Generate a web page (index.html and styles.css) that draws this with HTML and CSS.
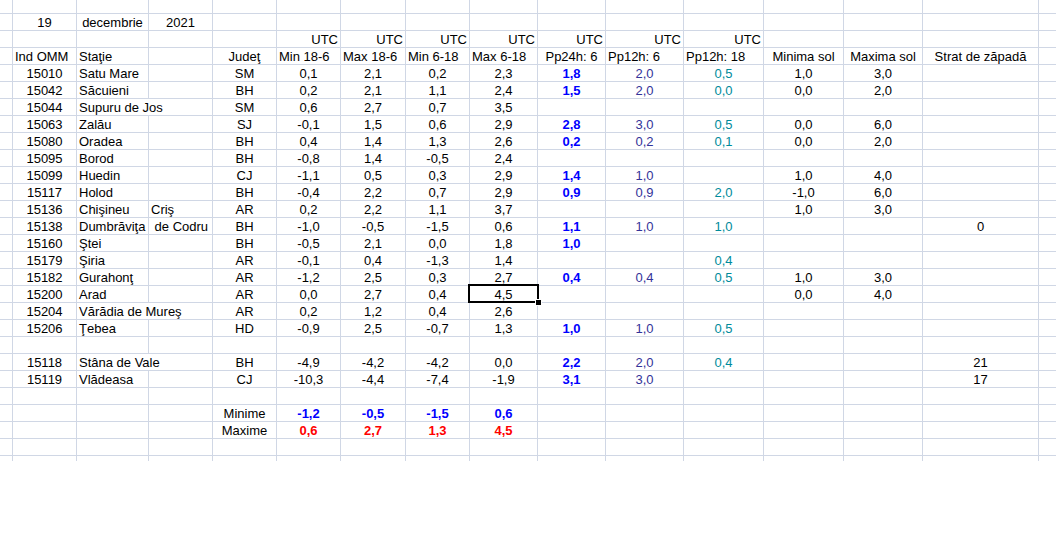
FILE: index.html
```html
<!DOCTYPE html>
<html lang="ro">
<head>
<meta charset="utf-8">
<title>Temperaturi 19 decembrie 2021</title>
<link rel="stylesheet" href="styles.css">
</head>
<body>
<div class="sheet">
  <div class="r top"><span></span><span></span><span></span><span></span><span></span><span></span><span></span><span></span><span></span><span></span><span></span><span></span><span></span><span></span><span></span><span></span></div>
  <div class="r"><span></span><span>19</span><span>decembrie</span><span>2021</span><span></span><span></span><span></span><span></span><span></span><span></span><span></span><span></span><span></span><span></span><span></span><span></span></div>
  <div class="r"><span></span><span></span><span></span><span></span><span></span><span class="rt">UTC</span><span class="rt">UTC</span><span class="rt">UTC</span><span class="rt">UTC</span><span class="rt">UTC</span><span class="rt">UTC</span><span class="rt">UTC</span><span></span><span></span><span></span><span></span></div>
  <div class="r"><span></span><span class="l">Ind OMM</span><span class="l">Staţie</span><span></span><span>Judeţ</span><span class="l">Min 18-6</span><span class="l">Max 18-6</span><span class="l">Min 6-18</span><span class="l">Max 6-18</span><span>Pp24h: 6</span><span class="l">Pp12h: 6</span><span class="l">Pp12h: 18</span><span>Minima sol</span><span>Maxima sol</span><span>Strat de zăpadă</span><span></span></div>

  <div class="r"><span></span><span>15010</span><span class="l">Satu Mare</span><span></span><span>SM</span><span>0,1</span><span>2,1</span><span>0,2</span><span>2,3</span><span class="b">1,8</span><span class="p">2,0</span><span class="t">0,5</span><span>1,0</span><span>3,0</span><span></span><span></span></div>
  <div class="r"><span></span><span>15042</span><span class="l">Săcuieni</span><span></span><span>BH</span><span>0,2</span><span>2,1</span><span>1,1</span><span>2,4</span><span class="b">1,5</span><span class="p">2,0</span><span class="t">0,0</span><span>0,0</span><span>2,0</span><span></span><span></span></div>
  <div class="r"><span></span><span>15044</span><span class="l s2">Supuru de Jos</span><span>SM</span><span>0,6</span><span>2,7</span><span>0,7</span><span>3,5</span><span></span><span></span><span></span><span></span><span></span><span></span><span></span></div>
  <div class="r"><span></span><span>15063</span><span class="l">Zalău</span><span></span><span>SJ</span><span>-0,1</span><span>1,5</span><span>0,6</span><span>2,9</span><span class="b">2,8</span><span class="p">3,0</span><span class="t">0,5</span><span>0,0</span><span>6,0</span><span></span><span></span></div>
  <div class="r"><span></span><span>15080</span><span class="l">Oradea</span><span></span><span>BH</span><span>0,4</span><span>1,4</span><span>1,3</span><span>2,6</span><span class="b">0,2</span><span class="p">0,2</span><span class="t">0,1</span><span>0,0</span><span>2,0</span><span></span><span></span></div>
  <div class="r"><span></span><span>15095</span><span class="l">Borod</span><span></span><span>BH</span><span>-0,8</span><span>1,4</span><span>-0,5</span><span>2,4</span><span></span><span></span><span></span><span></span><span></span><span></span><span></span></div>
  <div class="r"><span></span><span>15099</span><span class="l">Huedin</span><span></span><span>CJ</span><span>-1,1</span><span>0,5</span><span>0,3</span><span>2,9</span><span class="b">1,4</span><span class="p">1,0</span><span></span><span>1,0</span><span>4,0</span><span></span><span></span></div>
  <div class="r"><span></span><span>15117</span><span class="l">Holod</span><span></span><span>BH</span><span>-0,4</span><span>2,2</span><span>0,7</span><span>2,9</span><span class="b">0,9</span><span class="p">0,9</span><span class="t">2,0</span><span>-1,0</span><span>6,0</span><span></span><span></span></div>
  <div class="r"><span></span><span>15136</span><span class="l">Chişineu</span><span class="l">Criş</span><span>AR</span><span>0,2</span><span>2,2</span><span>1,1</span><span>3,7</span><span></span><span></span><span></span><span>1,0</span><span>3,0</span><span></span><span></span></div>
  <div class="r"><span></span><span>15138</span><span class="l">Dumbrăviţa</span><span class="l">&nbsp;de Codru</span><span>BH</span><span>-1,0</span><span>-0,5</span><span>-1,5</span><span>0,6</span><span class="b">1,1</span><span class="p">1,0</span><span class="t">1,0</span><span></span><span></span><span>0</span><span></span></div>
  <div class="r"><span></span><span>15160</span><span class="l">Ştei</span><span></span><span>BH</span><span>-0,5</span><span>2,1</span><span>0,0</span><span>1,8</span><span class="b">1,0</span><span></span><span></span><span></span><span></span><span></span><span></span></div>
  <div class="r"><span></span><span>15179</span><span class="l">Şiria</span><span></span><span>AR</span><span>-0,1</span><span>0,4</span><span>-1,3</span><span>1,4</span><span></span><span></span><span class="t">0,4</span><span></span><span></span><span></span><span></span></div>
  <div class="r"><span></span><span>15182</span><span class="l">Gurahonţ</span><span></span><span>AR</span><span>-1,2</span><span>2,5</span><span>0,3</span><span>2,7</span><span class="b">0,4</span><span class="p">0,4</span><span class="t">0,5</span><span>1,0</span><span>3,0</span><span></span><span></span></div>
  <div class="r"><span></span><span>15200</span><span class="l">Arad</span><span></span><span>AR</span><span>0,0</span><span>2,7</span><span>0,4</span><span class="sel">4,5</span><span></span><span></span><span></span><span>0,0</span><span>4,0</span><span></span><span></span></div>
  <div class="r"><span></span><span>15204</span><span class="l s2">Vărădia de Mureş</span><span>AR</span><span>0,2</span><span>1,2</span><span>0,4</span><span>2,6</span><span></span><span></span><span></span><span></span><span></span><span></span><span></span></div>
  <div class="r"><span></span><span>15206</span><span class="l">Ţebea</span><span></span><span>HD</span><span>-0,9</span><span>2,5</span><span>-0,7</span><span>1,3</span><span class="b">1,0</span><span class="p">1,0</span><span class="t">0,5</span><span></span><span></span><span></span><span></span></div>
  <div class="r"><span></span><span></span><span></span><span></span><span></span><span></span><span></span><span></span><span></span><span></span><span></span><span></span><span></span><span></span><span></span><span></span></div>
  <div class="r"><span></span><span>15118</span><span class="l s2">Stâna de Vale</span><span>BH</span><span>-4,9</span><span>-4,2</span><span>-4,2</span><span>0,0</span><span class="b">2,2</span><span class="p">2,0</span><span class="t">0,4</span><span></span><span></span><span>21</span><span></span></div>
  <div class="r"><span></span><span>15119</span><span class="l">Vlădeasa</span><span></span><span>CJ</span><span>-10,3</span><span>-4,4</span><span>-7,4</span><span>-1,9</span><span class="b">3,1</span><span class="p">3,0</span><span></span><span></span><span></span><span>17</span><span></span></div>
  <div class="r"><span></span><span></span><span></span><span></span><span></span><span></span><span></span><span></span><span></span><span></span><span></span><span></span><span></span><span></span><span></span><span></span></div>
  <div class="r"><span></span><span></span><span></span><span></span><span>Minime</span><span class="mn">-1,2</span><span class="mn">-0,5</span><span class="mn">-1,5</span><span class="mn">0,6</span><span></span><span></span><span></span><span></span><span></span><span></span><span></span></div>
  <div class="r"><span></span><span></span><span></span><span></span><span>Maxime</span><span class="mx">0,6</span><span class="mx">2,7</span><span class="mx">1,3</span><span class="mx">4,5</span><span></span><span></span><span></span><span></span><span></span><span></span><span></span></div>
  <div class="r"><span></span><span></span><span></span><span></span><span></span><span></span><span></span><span></span><span></span><span></span><span></span><span></span><span></span><span></span><span></span><span></span></div>
  <div class="r end"><span></span><span></span><span></span><span></span><span></span><span></span><span></span><span></span><span></span><span></span><span></span><span></span><span></span><span></span><span></span><span></span></div>
</div>
</body>
</html>
```

FILE: styles.css
```css
html, body {
  margin: 0;
  padding: 0;
  background: #ffffff;
}

body {
  font-family: "Liberation Sans", Arial, sans-serif;
  font-size: 13px;
  color: #000000;
}

.sheet {
  width: 1056px;
  overflow: hidden;
}

.r {
  display: grid;
  grid-template-columns: 13px 64px 72px 64px 64px 64px 65px 64px 68px 68px 78px 80px 80px 79px 116px 1fr;
  height: 17px;
  box-sizing: border-box;
  border-bottom: 1px solid #d0d7e5;
}

.r.top {
  height: 14px;
}

.r.end {
  height: 5px;
  border-bottom: 0;
}

.r > span {
  display: block;
  box-sizing: border-box;
  border-right: 1px solid #d0d7e5;
  padding: 1px 2px 0;
  line-height: 16px;
  white-space: nowrap;
  text-align: center;
}

.r > span:last-child {
  border-right: 0;
}

.r > .l {
  text-align: left;
}

.r > .rt {
  text-align: right;
}

.r > .s2 {
  grid-column: span 2;
}

.b {
  color: #0000ff;
  font-weight: bold;
}

.p {
  color: #333399;
}

.t {
  color: #008b9b;
}

.mn {
  color: #0000ff;
  font-weight: bold;
}

.mx {
  color: #ff0000;
  font-weight: bold;
}

.r > .sel {
  position: relative;
}

.sel::before {
  content: "";
  position: absolute;
  left: -2px;
  top: -2px;
  width: 71px;
  height: 19px;
  box-sizing: border-box;
  border: 2px solid #000000;
}

.sel::after {
  content: "";
  position: absolute;
  left: 66px;
  top: 14px;
  width: 5px;
  height: 5px;
  background: #000000;
  box-shadow: 0 0 0 1px #ffffff;
}
```
